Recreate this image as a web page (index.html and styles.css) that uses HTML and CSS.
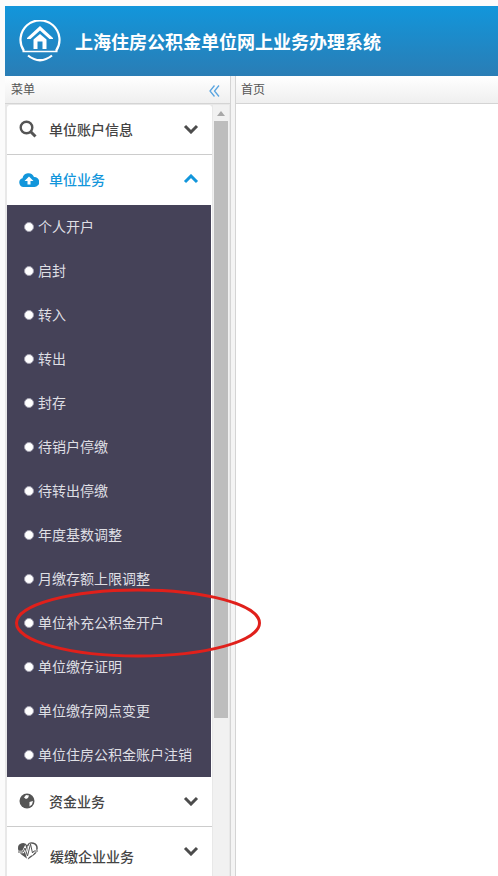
FILE: index.html
```html
<!DOCTYPE html>
<html lang="zh">
<head>
    <meta charset="UTF-8">
    <title>上海住房公积金单位网上业务办理系统</title>
    <link rel="stylesheet" href="styles.css">
</head>
<body>
    <div class="header">
        <svg class="logo" viewBox="0 0 42 42" width="42" height="42">
            <path d="M5 31A19.500 19.500 0 1 1 37 31" fill="none" stroke="#fff" stroke-width="2.200"/>
            <path d="M3.500 31.500H38.500" stroke="#fff" stroke-width="1.600"/>
            <path d="M9 35.500Q21 45 33 35.500" fill="none" stroke="#fff" stroke-width="2.200"/>
            <path d="M8 18L21 6L34 18V19H30.500L21 10.500L11.500 19H8Z" fill="#fff"/>
            <path d="M14.500 19.500L21 14L27.500 19.500V29H23.500V21.500H18.500V29H14.500Z" fill="#fff"/>
        </svg>
        <div class="title">上海住房公积金单位网上业务办理系统</div>
    </div>
    <div class="main">
        <div class="side">
            <div class="panel-head">
                <span>菜单</span>
                <svg class="collapse" viewBox="0 0 11 12" width="11" height="12"><path d="M5.500 0.500L1 6L5.500 11.500M10 0.500L5.500 6L10 11.500" fill="none" stroke="#5aa5e0" stroke-width="1.300"/></svg>
            </div>
            <div class="side-body">
                <div class="menu">
                    <div class="menu-item first">
                        <svg viewBox="0 0 18 18" width="18" height="18"><circle cx="7.500" cy="7.500" r="5.800" fill="none" stroke="#555" stroke-width="2.400"/><path d="M11.500 11.500L16.500 16.500" stroke="#555" stroke-width="3"/></svg>
                        <span class="label">单位账户信息</span>
                        <svg viewBox="0 0 16 10" width="16" height="10"><path d="M2 2L8 8L14 2" fill="none" stroke="#4c4c4c" stroke-width="3"/></svg>
                    </div>
                    <div class="menu-item open">
                        <svg viewBox="0 0 20 15" width="20" height="15"><path d="M5 15A4.500 4.500 0 0 1 3.500 6.200A6 6 0 0 1 15 5A5 5 0 0 1 15.500 15Z" fill="#1296db"/><path d="M10 4.500L14.500 9H11.500V12.500H8.500V9H5.500Z" fill="#fff"/></svg>
                        <span class="label">单位业务</span>
                        <svg viewBox="0 0 16 10" width="16" height="10"><path d="M2 8L8 2L14 8" fill="none" stroke="#1296db" stroke-width="3"/></svg>
                    </div>
                    <ul class="submenu">
                        <li>个人开户</li>
                        <li>启封</li>
                        <li>转入</li>
                        <li>转出</li>
                        <li>封存</li>
                        <li>待销户停缴</li>
                        <li>待转出停缴</li>
                        <li>年度基数调整</li>
                        <li>月缴存额上限调整</li>
                        <li>单位补充公积金开户</li>
                        <li>单位缴存证明</li>
                        <li>单位缴存网点变更</li>
                        <li>单位住房公积金账户注销</li>
                    </ul>
                    <div class="menu-item">
                        <svg viewBox="0 0 16 16" width="16" height="16"><circle cx="8" cy="8" r="7.500" fill="#555"/><path d="M7 2L10 2.500L9 5L7 6L5 4.500ZM10.500 9L14 8L13 11.500L10.500 13.500Z" fill="#fff"/></svg>
                        <span class="label">资金业务</span>
                        <svg viewBox="0 0 16 10" width="16" height="10"><path d="M2 2L8 8L14 2" fill="none" stroke="#4c4c4c" stroke-width="3"/></svg>
                    </div>
                    <div class="menu-item last">
                        <svg class="heart" viewBox="0 0 21 20" width="21" height="20"><path d="M10.500 5A5 5 0 0 0 1 7.500Q1 11 5 14L10.500 18Z" fill="#555"/><path d="M10.500 5A5 5 0 0 1 20 7.500Q20 11 16 14L10.500 18" fill="none" stroke="#555" stroke-width="1.500"/><path d="M1 11H6L8 7L10.500 15L13.500 3L15.500 12L17 10H21" fill="none" stroke="#fff" stroke-width="2.500"/><path d="M1 11H6L8 7L10.500 15L13.500 3L15.500 12L17 10H21" fill="none" stroke="#555" stroke-width="1"/></svg>
                        <span class="label low">缓缴企业业务</span>
                        <svg viewBox="0 0 16 10" width="16" height="10"><path d="M2 2L8 8L14 2" fill="none" stroke="#4c4c4c" stroke-width="3"/></svg>
                    </div>
                </div>
                <div class="scrollbar">
                    <div class="arrow"></div>
                    <div class="thumb"></div>
                </div>
            </div>
        </div>
        <div class="splitter"></div>
        <div class="content">
            <div class="panel-head"><span>首页</span></div>
        </div>
    </div>
    <svg class="mark" viewBox="0 0 248 72" width="248" height="72"><ellipse cx="124" cy="36" rx="121.500" ry="33" fill="none" stroke="#e0201b" stroke-width="3"/></svg>
</body>
</html>
```

FILE: styles.css
```css
* {
    margin: 0;
    padding: 0;
    box-sizing: border-box;
    font-family: "Noto Sans CJK SC", "Liberation Sans", sans-serif;
}
html, body {
    height: 876px;
    overflow: hidden;
}
body {
    position: relative;
    background: #fbfbfb;
    padding: 6px 0 0 5px;
    display: flex;
    flex-direction: column;
}
.header {
    height: 70px;
    flex: none;
    background: linear-gradient(180deg, #1296db, #2a7db5);
    display: flex;
    align-items: center;
    padding-left: 14px;
    gap: 14px;
}
.title {
    color: #fff;
    font-size: 18px;
    font-weight: 700;
}
.main {
    flex: 1;
    display: flex;
    min-height: 0;
}
.side {
    width: 225px;
    flex: none;
    background: #e8e8e8;
    display: flex;
    flex-direction: column;
}
.panel-head {
    height: 28px;
    flex: none;
    display: flex;
    align-items: center;
    justify-content: space-between;
    padding: 0 10px 2px 6px;
    font-size: 12px;
    color: #555;
    background: linear-gradient(180deg, #fff, #efefef);
    border-bottom: 1px solid #d4d4d4;
}
.content .panel-head {
    padding-left: 5px;
}
.collapse {
    margin-top: 4px;
}
.side-body {
    flex: 1;
    display: flex;
    min-height: 0;
    padding: 1px 1px 0 2px;
    gap: 1px;
}
.menu {
    width: 205px;
    flex: none;
    background: #fff;
    border-radius: 4px 4px 0 0;
}
.menu-item {
    height: 50px;
    background: #fff;
    display: grid;
    grid-template-columns: 30px 1fr auto;
    align-items: center;
    padding: 0 13px 2px 12px;
    color: #444;
    border-bottom: 1px solid #ccc;
    font-size: 14px;
    font-weight: 500;
}
.menu-item.first {
    border-radius: 4px 4px 0 0;
}
.menu-item.open {
    color: #1296db;
    border-bottom: none;
}
.menu-item.last {
    border-bottom: none;
}
.heart {
    margin-left: -2px;
}
.label.low {
    padding: 10px 0 0 1px;
}
.submenu {
    list-style: none;
    background: #454258;
    height: 572px;
    margin-right: 1px;
}
.submenu li {
    height: 44px;
    display: flex;
    align-items: center;
    padding: 0 0 2px 31px;
    color: #dfdfe4;
    font-size: 14px;
    position: relative;
}
.submenu li::before {
    content: "";
    position: absolute;
    left: 17px;
    top: 17px;
    width: 8px;
    height: 8px;
    border-radius: 50%;
    background: #fff;
    border: 1px solid #a09eae;
}
.scrollbar {
    width: 16px;
    flex: none;
    background: #f1f1f1;
    padding: 0 1px;
}
.arrow {
    width: 0;
    margin: 6px auto 5px;
    border: 4px solid transparent;
    border-top: none;
    border-bottom: 5px solid #a8a8a8;
}
.thumb {
    height: 597px;
    background: #bdbdbd;
}
.splitter {
    width: 6px;
    flex: none;
    background: #f4f4f4;
    border-left: 1px solid #d4d4d4;
    border-right: 1px solid #d4d4d4;
}
.content {
    flex: 1;
    background: #fff;
}
.mark {
    position: absolute;
    left: 14px;
    top: 587px;
}
```
